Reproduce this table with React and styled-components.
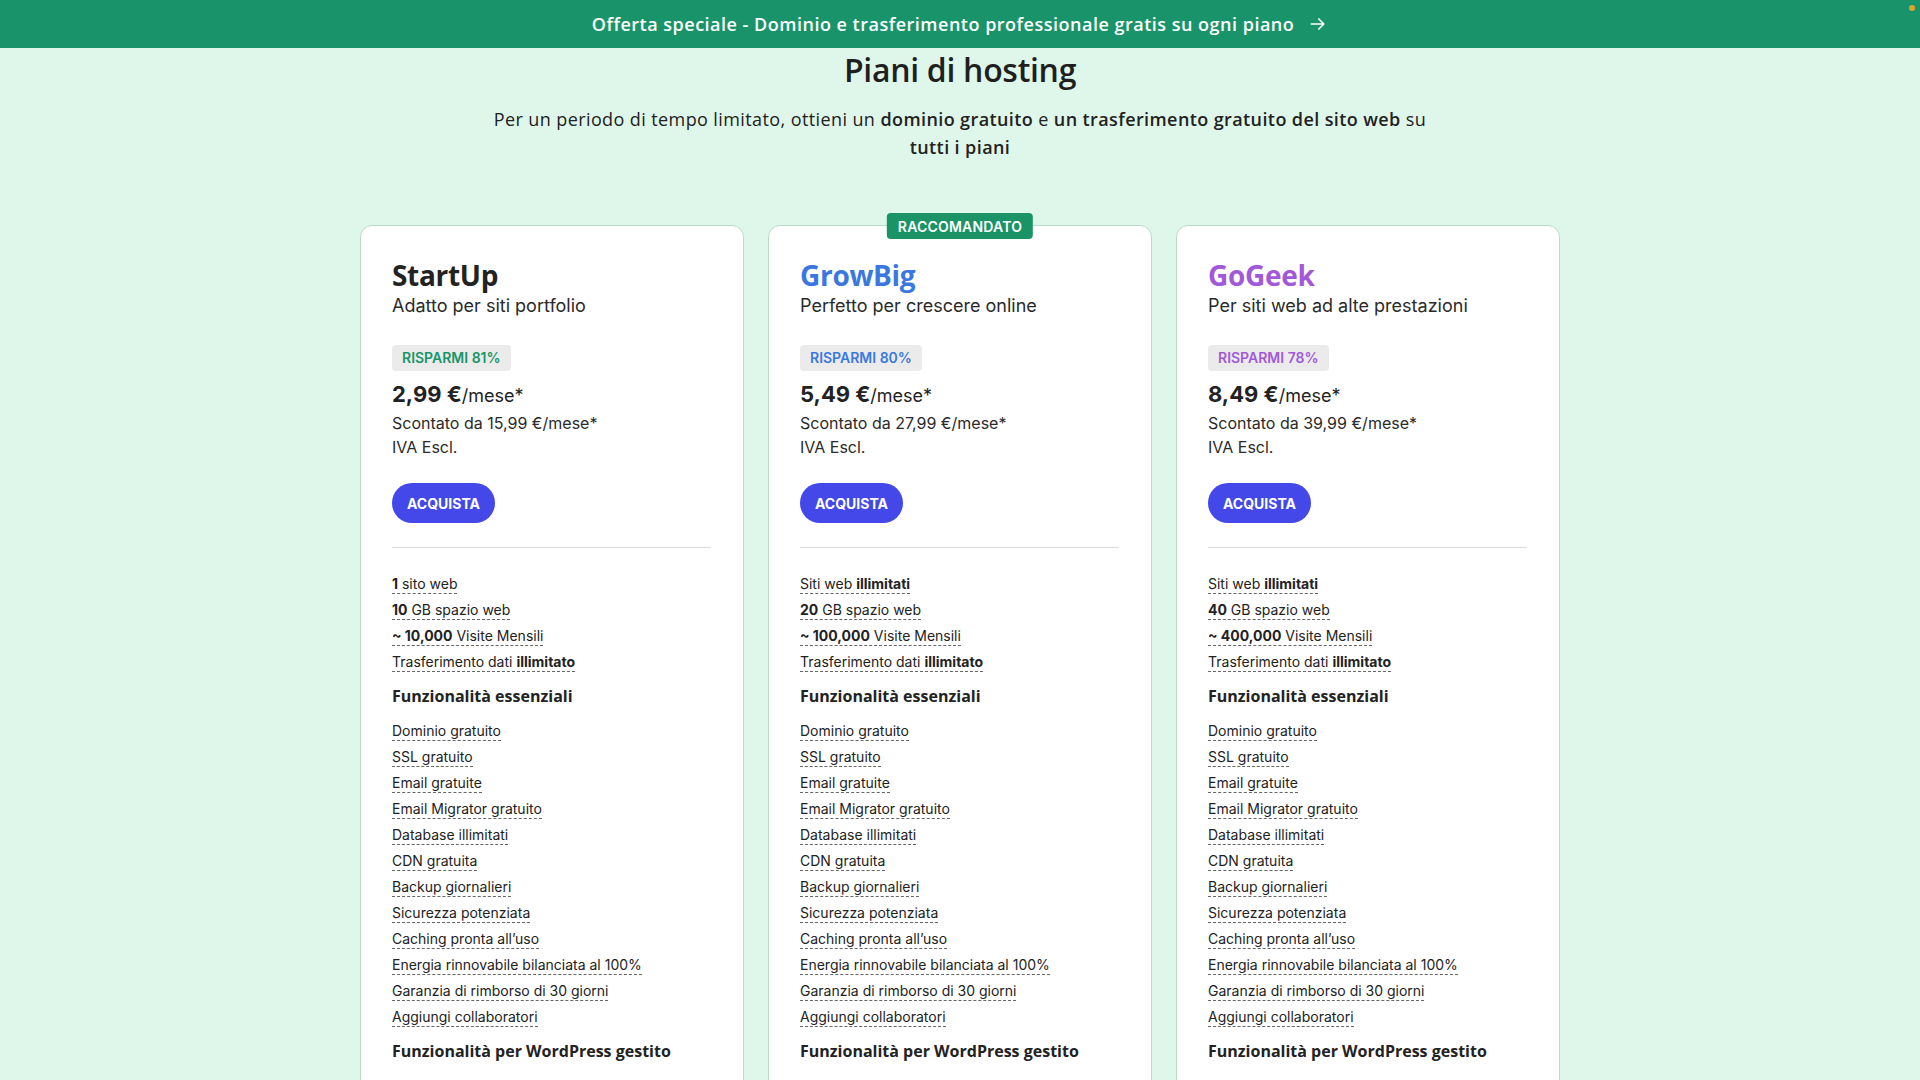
import React from "react";
import styled, { createGlobalStyle } from "styled-components";

const GlobalStyle = createGlobalStyle`
  * { box-sizing: border-box; }
  body {
    margin: 0;
    background: #dff7ea;
    font-family: Inter, "Liberation Sans", sans-serif;
    color: #222;
  }
`;

const plans = [
  {
    name: "StartUp",
    tone: "green",
    subtitle: "Adatto per siti portfolio",
    save: "RISPARMI 81%",
    price: "2,99 €",
    was: "15,99 €/mese*",
    specs: [
      [["1", true], [" sito web"]],
      [["10", true], [" GB spazio web"]],
      [["~ 10,000", true], [" Visite Mensili"]],
      [["Trasferimento dati "], ["illimitato", true]],
    ],
  },
  {
    name: "GrowBig",
    tone: "blue",
    subtitle: "Perfetto per crescere online",
    save: "RISPARMI 80%",
    price: "5,49 €",
    was: "27,99 €/mese*",
    recommended: true,
    specs: [
      [["Siti web "], ["illimitati", true]],
      [["20", true], [" GB spazio web"]],
      [["~ 100,000", true], [" Visite Mensili"]],
      [["Trasferimento dati "], ["illimitato", true]],
    ],
  },
  {
    name: "GoGeek",
    tone: "purple",
    subtitle: "Per siti web ad alte prestazioni",
    save: "RISPARMI 78%",
    price: "8,49 €",
    was: "39,99 €/mese*",
    specs: [
      [["Siti web "], ["illimitati", true]],
      [["40", true], [" GB spazio web"]],
      [["~ 400,000", true], [" Visite Mensili"]],
      [["Trasferimento dati "], ["illimitato", true]],
    ],
  },
];

const essentials = [
  "Dominio gratuito",
  "SSL gratuito",
  "Email gratuite",
  "Email Migrator gratuito",
  "Database illimitati",
  "CDN gratuita",
  "Backup giornalieri",
  "Sicurezza potenziata",
  "Caching pronta all’uso",
  "Energia rinnovabile bilanciata al 100%",
  "Garanzia di rimborso di 30 giorni",
  "Aggiungi collaboratori",
];

const tones = {
  green: "#1a9467",
  blue: "#3a78e0",
  purple: "#a259d9",
};

export default function App() {
  return (
    <>
      <GlobalStyle />
      <Banner>
        Offerta speciale - Dominio e trasferimento professionale gratis su ogni piano
        <Arrow viewBox="0 0 24 24">
          <path d="M4 12h15M13 6l6 6-6 6" />
        </Arrow>
        <Dot />
      </Banner>
      <Page>
        <Title>Piani di hosting</Title>
        <Lead>
          Per un periodo di tempo limitato, ottieni un <b>dominio gratuito</b> e{" "}
          <b>un trasferimento gratuito del sito web</b> su
          <br />
          <b>tutti i piani</b>
        </Lead>
        <Cards>
          {plans.map((plan) => (
            <Card key={plan.name}>
              {plan.recommended && <Ribbon>RACCOMANDATO</Ribbon>}
              <PlanName tone={plan.tone}>{plan.name}</PlanName>
              <PlanSub>{plan.subtitle}</PlanSub>
              <Save tone={plan.tone}>{plan.save}</Save>
              <Price>
                <strong>{plan.price}</strong>/mese*
              </Price>
              <Note>Scontato da {plan.was}</Note>
              <Note>IVA Escl.</Note>
              <BuyButton>ACQUISTA</BuyButton>
              <Divider />
              <FeatureList>
                {plan.specs.map((parts, i) => (
                  <Feature key={i}>
                    <Dashed>
                      {parts.map(([text, bold], j) =>
                        bold ? <b key={j}>{text}</b> : <span key={j}>{text}</span>
                      )}
                    </Dashed>
                  </Feature>
                ))}
              </FeatureList>
              <GroupTitle>Funzionalità essenziali</GroupTitle>
              <FeatureList>
                {essentials.map((item) => (
                  <Feature key={item}>
                    <Dashed>{item}</Dashed>
                  </Feature>
                ))}
              </FeatureList>
              <GroupTitle>Funzionalità per WordPress gestito</GroupTitle>
            </Card>
          ))}
        </Cards>
      </Page>
    </>
  );
}

const Banner = styled.div`
  position: relative;
  height: 48px;
  background: #19946a;
  color: #fff;
  display: flex;
  align-items: center;
  justify-content: center;
  gap: 14px;
  font-family: "Open Sans", Inter, sans-serif;
  font-size: 18px;
  font-weight: 600;
  letter-spacing: 0.5px;
`;

const Arrow = styled.svg`
  width: 20px;
  height: 20px;
  fill: none;
  stroke: #fff;
  stroke-width: 2;
  stroke-linecap: round;
  stroke-linejoin: round;
`;

const Dot = styled.span`
  position: absolute;
  top: 5px;
  right: 5px;
  width: 6px;
  height: 6px;
  border-radius: 50%;
  background: #e2a232;
`;

const Page = styled.main`
  display: flex;
  flex-direction: column;
  align-items: center;
  padding-bottom: 40px;
`;

const Title = styled.h1`
  margin: 2px 0 0;
  font-family: "Open Sans", Inter, sans-serif;
  font-size: 32px;
  line-height: 40px;
  font-weight: 600;
  color: #1f1f1f;
  letter-spacing: -0.3px;
`;

const Lead = styled.p`
  margin: 15px 0 0;
  text-align: center;
  font-family: "Open Sans", Inter, sans-serif;
  font-size: 18px;
  line-height: 28px;
  color: #222;
  letter-spacing: 0.4px;

  b {
    font-weight: 600;
  }
`;

const Cards = styled.div`
  margin-top: 64px;
  width: 1200px;
  display: grid;
  grid-template-columns: repeat(3, 1fr);
  gap: 24px;
`;

const Card = styled.section`
  position: relative;
  background: #fff;
  border: 1px solid #b9dcc8;
  border-radius: 12px;
  padding: 31px 32px 32px 31px;
`;

const Ribbon = styled.div`
  position: absolute;
  top: -13px;
  left: 50%;
  transform: translateX(-50%);
  height: 26px;
  padding: 0 11px;
  display: flex;
  align-items: center;
  background: #1a9467;
  color: #fff;
  border-radius: 4px;
  font-size: 14px;
  font-weight: 600;
  letter-spacing: 0.2px;
`;

const PlanName = styled.h2`
  margin: 0;
  font-family: "Open Sans", Inter, sans-serif;
  font-size: 28px;
  line-height: 36px;
  font-weight: 700;
  letter-spacing: -0.3px;
  color: ${({ tone }) => (tone === "green" ? "#222" : tones[tone])};
`;

const PlanSub = styled.p`
  margin: 0;
  font-size: 18px;
  line-height: 26px;
  color: #2a2a2a;
`;

const Save = styled.span`
  display: inline-block;
  margin-top: 26px;
  height: 26px;
  padding: 0 10px;
  line-height: 26px;
  border-radius: 4px;
  background: #ebebeb;
  font-size: 14px;
  font-weight: 600;
  color: ${({ tone }) => tones[tone]};
`;

const Price = styled.div`
  margin-top: 8px;
  font-size: 18px;
  line-height: 30px;
  color: #222;

  strong {
    font-size: 22px;
    font-weight: 700;
  }
`;

const Note = styled.div`
  font-size: 16px;
  line-height: 24px;
  color: #2a2a2a;
`;

const BuyButton = styled.button`
  display: block;
  margin-top: 24px;
  height: 40px;
  padding: 0 15px;
  border: none;
  border-radius: 20px;
  background: #4548e9;
  color: #fff;
  font-family: Inter, sans-serif;
  font-size: 14px;
  font-weight: 700;
  letter-spacing: 0;
  cursor: pointer;
`;

const Divider = styled.hr`
  margin: 24px 0 0;
  border: none;
  border-top: 1px solid #dcdcdc;
`;

const FeatureList = styled.ul`
  list-style: none;
  margin: 0;
  padding: 0;

  ${Divider} + & {
    margin-top: 23px;
  }
`;

const Feature = styled.li`
  font-size: 14px;
  line-height: 26px;
  color: #222;
`;

const Dashed = styled.span`
  border-bottom: 1px dashed #666;
  padding-bottom: 1px;

  b {
    font-weight: 700;
  }
`;

const GroupTitle = styled.h3`
  margin: 8px 0 9px;
  font-family: "Open Sans", Inter, sans-serif;
  font-size: 16px;
  line-height: 26px;
  font-weight: 700;
  color: #222;
`;
